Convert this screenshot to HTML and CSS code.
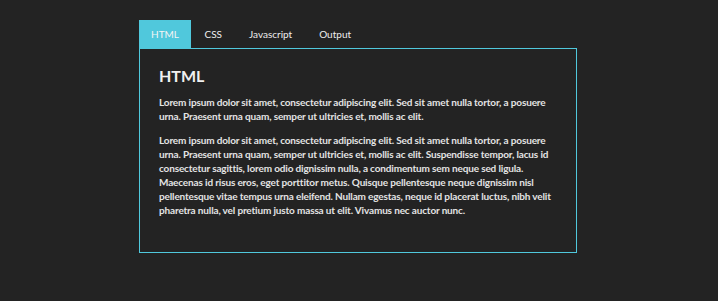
FILE: index.html
```
<!DOCTYPE html>
<html>
<head>
<meta charset="utf-8">
<link rel="stylesheet" href="styles.css">
</head>
<body>
<div class="wrap">
  <div class="tabs">
    <div class="tab active">HTML</div>
    <div class="tab">CSS</div>
    <div class="tab">Javascript</div>
    <div class="tab">Output</div>
  </div>
  <div class="panel">
    <h2 class="title">HTML</h2>
    <p class="text">Lorem ipsum dolor sit amet, consectetur adipiscing elit. Sed sit amet nulla tortor, a posuere urna. Praesent urna quam, semper ut ultricies et, mollis ac elit.</p>
    <p class="text">Lorem ipsum dolor sit amet, consectetur adipiscing elit. Sed sit amet nulla tortor, a posuere urna. Praesent urna quam, semper ut ultricies et, mollis ac elit. Suspendisse tempor, lacus id consectetur sagittis, lorem odio dignissim nulla, a condimentum sem neque sed ligula. Maecenas id risus eros, eget porttitor metus. Quisque pellentesque neque dignissim nisl pellentesque vitae tempus urna eleifend. Nullam egestas, neque id placerat luctus, nibh velit pharetra nulla, vel pretium justo massa ut elit. Vivamus nec auctor nunc.</p>
  </div>
</div>
</body>
</html>
```
FILE: styles.css
```
html, body {
  margin: 0;
  padding: 0;
  background: #232323;
  height: 100%;
}
body {
  font-family: Lato, "Liberation Sans", sans-serif;
  color: #e6e6e6;
}
.wrap {
  width: 438px;
  margin: 0 0 0 139px;
  padding-top: 20px;
}
.tabs {
  display: flex;
  height: 28px;
}
.tab {
  padding: 0 13.5px 0 13.5px;
  font-size: 10px;
  line-height: 29px;
  color: #eeeeee;
}
.tab.active {
  background: #50c8dc;
  padding: 0 12px;
  color: #f4f4f4;
}
.panel {
  border: 1px solid #50c8dc;
  height: 203px;
  padding: 0 19px;
}
.title {
  margin: 17px 0 9px;
  font-size: 16px;
  font-weight: 700;
  line-height: 20px;
  color: #f0f0f0;
}
.text {
  margin: 0 0 10px;
  font-size: 10px;
  font-weight: 700;
  line-height: 14px;
  letter-spacing: -0.15px;
  color: #e4e4e4;
}
```
